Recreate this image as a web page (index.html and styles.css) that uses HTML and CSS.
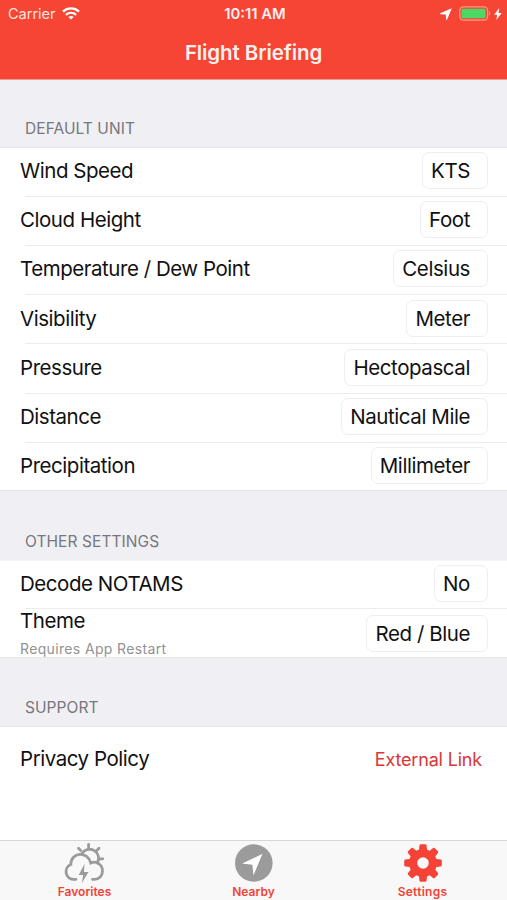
FILE: index.html
```html
<!DOCTYPE html>
<html lang="en">
<head>
<meta charset="utf-8">
<title>Flight Briefing</title>
<link rel="stylesheet" href="styles.css">
</head>
<body>
<div class="app">
  <header class="header">
    <div class="status">
      <div class="status-left"><span class="carrier">Carrier</span>
        <svg class="wifi" width="18" height="13" viewBox="0 0 18 13" fill="none" stroke="#fff" stroke-width="2.300"><path d="M1 4.600C5.500.4 12.500.4 17 4.600"/><path d="M3.900 7.900c3-2.700 7.200-2.700 10.200 0"/><path d="M9 12.400L6.300 9.900c1.500-1.300 3.900-1.300 5.400 0z" fill="#fff" stroke="none"/></svg>
      </div>
      <span class="clock">10:11 AM</span>
      <div class="status-right">
        <svg width="12" height="12" viewBox="0 0 12 12"><path d="M11.800.2L.1 5.300q-.3.8.3.900l5.300.4.4 5q.5.600 1 0z" fill="#fff"/></svg>
        <svg class="battery" width="32" height="15" viewBox="0 0 32 15"><rect x=".8" y=".8" width="27.800" height="13.400" rx="3.600" fill="none" stroke="#fb9d81" stroke-width="1.300"/><rect x="2.500" y="2.700" width="24" height="9.600" rx="1.300" fill="#4bd964"/><path d="M30 5.500c1.900.6 1.900 3.400 0 4z" fill="#fb9d81"/></svg>
        <svg class="bolt" width="8" height="12" viewBox="0 0 8 12"><path d="M5.200 0L.2 6.700h3L2.300 12l5.400-7H4.500z" fill="#fff"/></svg>
      </div>
    </div>
    <h1 class="title">Flight Briefing</h1>
  </header>
  <main class="content">
    <h2 class="section">DEFAULT UNIT</h2>
    <div class="group units">
      <div class="row"><span class="label">Wind Speed</span><span class="pill">KTS</span></div>
      <div class="row"><span class="label">Cloud Height</span><span class="pill">Foot</span></div>
      <div class="row"><span class="label">Temperature / Dew Point</span><span class="pill">Celsius</span></div>
      <div class="row"><span class="label">Visibility</span><span class="pill">Meter</span></div>
      <div class="row"><span class="label">Pressure</span><span class="pill">Hectopascal</span></div>
      <div class="row"><span class="label">Distance</span><span class="pill">Nautical Mile</span></div>
      <div class="row"><span class="label">Precipitation</span><span class="pill">Millimeter</span></div>
    </div>
    <h2 class="section tall">OTHER SETTINGS</h2>
    <div class="group other">
      <div class="row"><span class="label">Decode NOTAMS</span><span class="pill">No</span></div>
      <div class="row"><div class="stack"><span class="label">Theme</span><span class="note">Requires App Restart</span></div><span class="pill">Red / Blue</span></div>
    </div>
    <h2 class="section support">SUPPORT</h2>
    <div class="group last">
      <div class="row"><span class="label">Privacy Policy</span><span class="link">External Link</span></div>
    </div>
  </main>
  <nav class="tabs">
    <div class="tab">
      <svg width="42" height="42" viewBox="0 0 42 42" fill="none" stroke="#9b9b9b" stroke-width="2.800" stroke-linecap="round"><path d="M12 37.300H9.300A7.700 7.700 0 0 1 6.800 22.500C6.800 10 23.500 8.500 26.800 21c5.500-2.500 11.700 1.500 11.700 8 0 5-3.500 8.300-8 8.300h-2"/><path d="M18 11.500a8.700 8.700 0 0 1 15.300 9.500M24.600 2.500v3M14.500 6.200l2.200 2.200M35 6.200l-2.200 2.200M36.500 16.800h2.300"/><path d="M20.500 22L14.700 33h4.400l-1.200 8L24.500 30H20z" fill="#9b9b9b" stroke="none"/></svg>
      <span>Favorites</span>
    </div>
    <div class="tab">
      <svg width="42" height="42" viewBox="0 0 42 42"><circle cx="20.800" cy="21" r="18.800" fill="#9b9b9b"/><path d="M29.500 11.800L9.100 21.600l10.300 1.100 1.100 10.600z" fill="#fff"/></svg>
      <span>Nearby</span>
    </div>
    <div class="tab settings">
      <svg width="42" height="42" viewBox="0 0 42 42" fill="#f44336"><defs><path id="tooth" d="M15 9.500l2-2 .5-4.200q.2-1.100 1.200-1.100h4.600q1 0 1.200 1.100l.5 4.200 2 2z"/></defs><path fill-rule="evenodd" d="M21 7.200a13.800 13.800 0 1 0 0 27.600 13.800 13.800 0 0 0 0-27.600zM21 15.200a5.800 5.800 0 1 1 0 11.600 5.800 5.800 0 0 1 0-11.600z"/><use href="#tooth"/><use href="#tooth" transform="rotate(45 21 21)"/><use href="#tooth" transform="rotate(90 21 21)"/><use href="#tooth" transform="rotate(135 21 21)"/><use href="#tooth" transform="rotate(180 21 21)"/><use href="#tooth" transform="rotate(225 21 21)"/><use href="#tooth" transform="rotate(270 21 21)"/><use href="#tooth" transform="rotate(315 21 21)"/></svg>
      <span>Settings</span>
    </div>
  </nav>
</div>
</body>
</html>
```
FILE: styles.css
```css
* { box-sizing: border-box; }
body { margin: 0; background: #fff; color: #111; font-family: Inter, "Liberation Sans", sans-serif; }
.app { width: 507px; height: 900px; display: flex; flex-direction: column; overflow: hidden; }
.header { height: 80px; flex: none; background: #f64435; color: #fff; border-bottom: 1px solid #f3968f; }
.status { height: 27px; display: grid; grid-template-columns: 1fr auto 1fr; align-items: center; padding: 0 5px 0 8px; }
.status-left, .status-right { display: flex; align-items: center; }
.status-left { gap: 6px; }
.status-right { justify-content: flex-end; }
.battery { margin-left: 7px; }
.bolt { margin-left: 3px; }
.carrier { font-size: 14.500px; color: #ffe3df; }
.clock { font-size: 14.800px; font-weight: 600; color: #fff0ee; }
.title { margin: 0; text-align: center; font-size: 20.500px; line-height: 51px; font-weight: 600; letter-spacing: -.1px; color: #fff0ee; }
.content { flex: 1; }
.section { margin: 0; height: 67px; padding: 38px 25px 0; background: #efeff4; color: #77777c; font-size: 15.500px; line-height: 22px; font-weight: 400; letter-spacing: .07px; }
.section.tall { height: 69px; padding-top: 40px; }
.section.support { height: 68px; padding-top: 39px; }
.group { background: #fff; border-top: 1px solid #e4e4e7; border-bottom: 1px solid #e4e4e7; }
.row { height: 49.250px; display: flex; align-items: center; justify-content: space-between; padding: 0 19px 2px 20px; background: linear-gradient(#ececee, #ececee) 25px 100% / 100% 1px no-repeat; }
.units .row:first-child { height: 48.500px; }
.row:last-child { background: none; }
.label { font-size: 20.500px; line-height: 26px; letter-spacing: -.46px; }
.pill { height: 37px; margin-top: -1px; padding: 0 17px 0 8px; border: 1px solid #eeeef0; border-radius: 7px; font-size: 20.500px; line-height: 35px; letter-spacing: -.42px; }
.units { height: 344px; }
.other { height: 98px; border-top-color: #f5f5f7; }
.other .row { height: 48px; padding-bottom: 2px; }
.other .row:last-child { height: 49px; padding-bottom: 0; }
.stack { display: flex; flex-direction: column; }
.note { font-size: 14px; line-height: 20px; margin-top: 5px; letter-spacing: .35px; color: #929292; }
.last { border-bottom: 0; }
.last .row { height: 65px; padding-right: 25px; padding-bottom: 1px; }
.link { color: #d93636; font-size: 18px; letter-spacing: -.18px; }
.tabs { height: 60px; flex: none; display: grid; grid-template-columns: repeat(3, 169px); background: #f8f8f8; border-top: 1px solid #d6d6d6; }
.tab { display: flex; flex-direction: column; align-items: center; color: #f44336; font-size: 12px; line-height: 15px; font-weight: 600; }
.tab svg { margin-top: 1px; flex: none; }
.settings { letter-spacing: .25px; }
```
